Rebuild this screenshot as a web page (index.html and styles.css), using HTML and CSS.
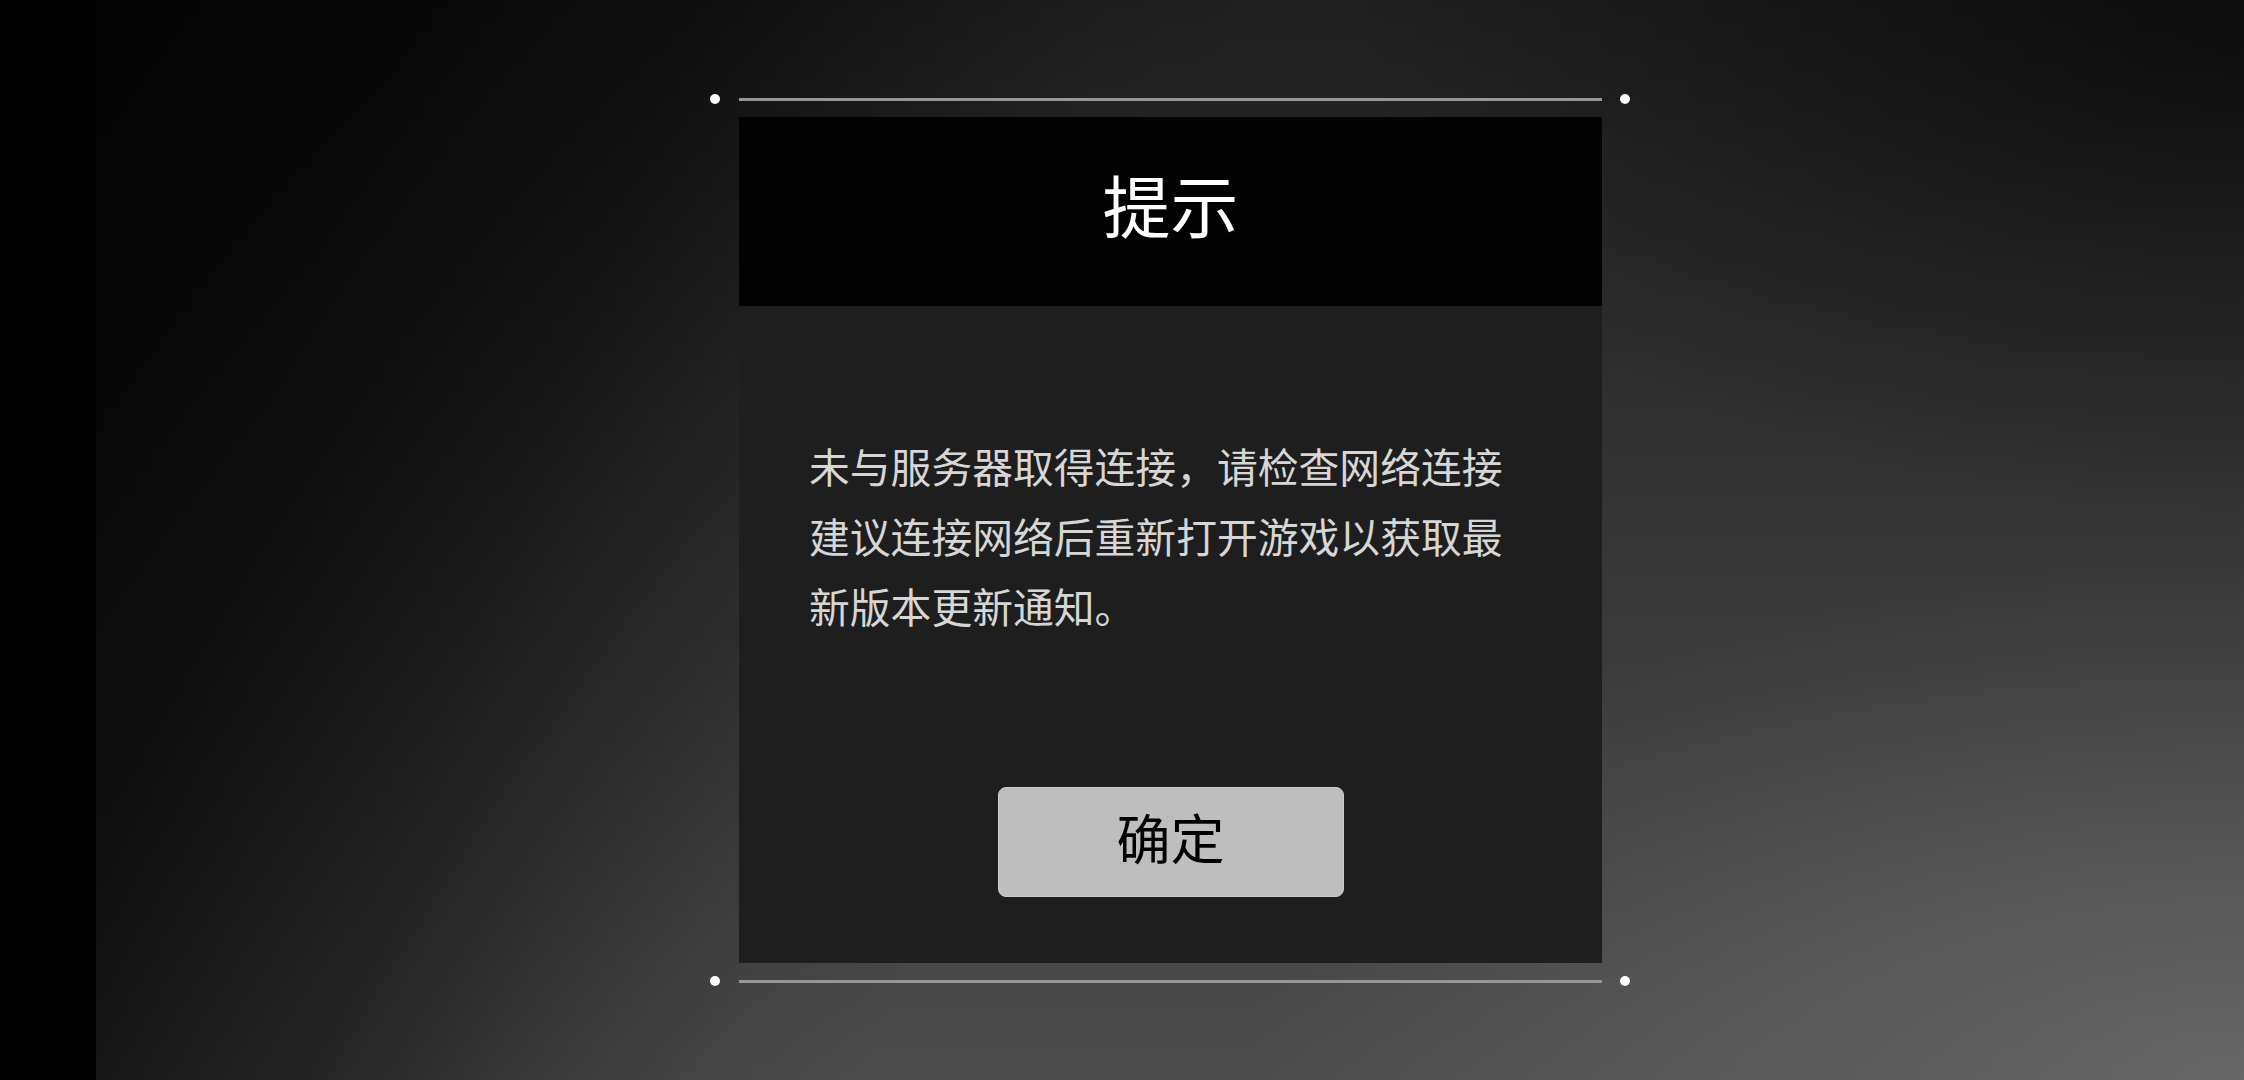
FILE: index.html
```html
<!DOCTYPE html>
<html lang="zh-CN">
<head>
<meta charset="utf-8">
<title>提示</title>
<link rel="stylesheet" href="styles.css">
</head>
<body>
<div class="screen">
  <aside class="edge"></aside>
  <main class="stage">
    <div class="dialog">
      <div class="rule"><span class="dot"></span><span class="line"></span><span class="dot"></span></div>
      <section class="panel">
        <header class="panel-head"><h1 class="title">提示</h1></header>
        <div class="panel-body">
          <p class="message">未与服务器取得连接，请检查网络连接建议连接网络后重新打开游戏以获取最新版本更新通知。</p>
          <button class="confirm" type="button">确定</button>
        </div>
      </section>
      <div class="rule"><span class="dot"></span><span class="line"></span><span class="dot"></span></div>
    </div>
  </main>
</div>
</body>
</html>
```
FILE: styles.css
```css
html, body {
  margin: 0;
  padding: 0;
  width: 100%;
  height: 100%;
  background: #000;
  overflow: hidden;
}

body {
  font-family: "Noto Sans CJK SC", "Noto Sans", sans-serif;
}

.screen {
  display: flex;
  width: 2244px;
  height: 1080px;
}

.edge {
  flex: none;
  width: 96px;
  background: #000;
}

.stage {
  flex: 1;
  display: flex;
  align-items: center;
  justify-content: center;
  background-color: #1e1e1e;
  background-image:
    linear-gradient(110deg, rgba(0,0,0,0.9) 0px, rgba(0,0,0,0.76) 300px, rgba(0,0,0,0.52) 570px, rgba(0,0,0,0.3) 740px, rgba(0,0,0,0.08) 950px, rgba(0,0,0,0) 1100px),
    radial-gradient(ellipse 900px 520px at 100% 0%, rgba(0,0,0,0.6), rgba(0,0,0,0)),
    radial-gradient(ellipse 1000px 520px at 100% 100%, rgba(125,125,125,0.55), rgba(125,125,125,0)),
    linear-gradient(to bottom, #1f1f1f 0%, #363636 50%, #4c4c4c 100%);
}

.dialog {
  display: flex;
  flex-direction: column;
  gap: 13px;
  width: 920px;
}

.rule {
  display: flex;
  align-items: center;
  height: 10px;
}

.dot {
  flex: none;
  width: 10px;
  height: 10px;
  border-radius: 50%;
  background: #fff;
}

.line {
  flex: 1;
  height: 3px;
  margin: 0 18px 0 19px;
  background: #969696;
}

.panel {
  margin: 0 28px 0 29px;
  display: flex;
  flex-direction: column;
}

.panel-head {
  height: 189px;
  box-sizing: border-box;
  padding-bottom: 16px;
  background: #020202;
  display: flex;
  align-items: center;
  justify-content: center;
}

.title {
  margin: 0;
  font-size: 68px;
  font-weight: 400;
  line-height: 1;
  color: #fff;
}

.panel-body {
  height: 657px;
  box-sizing: border-box;
  padding-top: 125px;
  background: #1e1e1e;
  display: flex;
  flex-direction: column;
}

.message {
  margin: 0;
  padding: 0 81px 0 70px;
  font-size: 40.8px;
  line-height: 70px;
  color: #d6d6d6;
}

.confirm {
  align-self: center;
  margin-top: 146px;
  width: 346px;
  height: 110px;
  box-sizing: border-box;
  padding: 0 0 10px 0;
  border: 1px solid #cbcbcb;
  border-radius: 8px;
  background: #bebebe;
  color: #000;
  font-family: "Noto Sans CJK SC", "Noto Sans", sans-serif;
  font-size: 54px;
  line-height: 1;
  display: flex;
  align-items: center;
  justify-content: center;
}
```
